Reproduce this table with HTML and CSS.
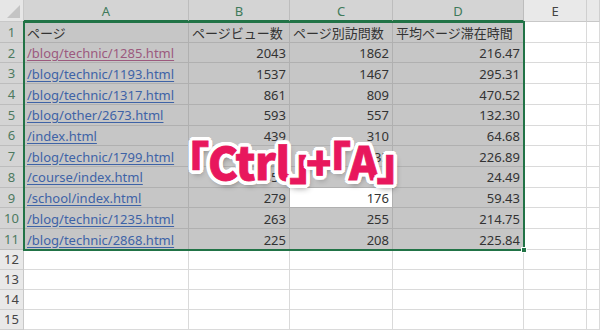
FILE: index.html
```html
<!DOCTYPE html>
<html lang="ja">
<head>
<meta charset="utf-8">
<link rel="stylesheet" href="styles.css">
</head>
<body>
<div class="wrap">
  <div class="sheet">
    <div class="corner"><span class="tri"></span></div>
    <div class="ch sel">A</div><div class="ch sel">B</div><div class="ch sel">C</div><div class="ch sel">D</div><div class="ch">E</div><div class="ch"></div>

    <div class="rh sel">1</div><div class="c sel">ページ</div><div class="c sel">ページビュー数</div><div class="c sel">ページ別訪問数</div><div class="c sel">平均ページ滞在時間</div><div class="c"></div><div class="c"></div>
    <div class="rh sel">2</div><div class="c sel"><a class="lnk visited">/blog/technic/1285.html</a></div><div class="c sel num">2043</div><div class="c sel num">1862</div><div class="c sel num">216.47</div><div class="c"></div><div class="c"></div>
    <div class="rh sel">3</div><div class="c sel"><a class="lnk">/blog/technic/1193.html</a></div><div class="c sel num">1537</div><div class="c sel num">1467</div><div class="c sel num">295.31</div><div class="c"></div><div class="c"></div>
    <div class="rh sel">4</div><div class="c sel"><a class="lnk">/blog/technic/1317.html</a></div><div class="c sel num">861</div><div class="c sel num">809</div><div class="c sel num">470.52</div><div class="c"></div><div class="c"></div>
    <div class="rh sel">5</div><div class="c sel"><a class="lnk">/blog/other/2673.html</a></div><div class="c sel num">593</div><div class="c sel num">557</div><div class="c sel num">132.30</div><div class="c"></div><div class="c"></div>
    <div class="rh sel">6</div><div class="c sel"><a class="lnk">/index.html</a></div><div class="c sel num">439</div><div class="c sel num">310</div><div class="c sel num">64.68</div><div class="c"></div><div class="c"></div>
    <div class="rh sel">7</div><div class="c sel"><a class="lnk">/blog/technic/1799.html</a></div><div class="c sel num">412</div><div class="c sel num">333</div><div class="c sel num">226.89</div><div class="c"></div><div class="c"></div>
    <div class="rh sel">8</div><div class="c sel"><a class="lnk">/course/index.html</a></div><div class="c sel num">351</div><div class="c sel num">291</div><div class="c sel num">24.49</div><div class="c"></div><div class="c"></div>
    <div class="rh sel">9</div><div class="c sel"><a class="lnk">/school/index.html</a></div><div class="c sel num">279</div><div class="c act num">176</div><div class="c sel num">59.43</div><div class="c"></div><div class="c"></div>
    <div class="rh sel">10</div><div class="c sel"><a class="lnk">/blog/technic/1235.html</a></div><div class="c sel num">263</div><div class="c sel num">255</div><div class="c sel num">214.75</div><div class="c"></div><div class="c"></div>
    <div class="rh sel">11</div><div class="c sel"><a class="lnk">/blog/technic/2868.html</a></div><div class="c sel num">225</div><div class="c sel num">208</div><div class="c sel num">225.84</div><div class="c"></div><div class="c"></div>

    <div class="rh">12</div><div class="c"></div><div class="c"></div><div class="c"></div><div class="c"></div><div class="c"></div><div class="c"></div>
    <div class="rh">13</div><div class="c"></div><div class="c"></div><div class="c"></div><div class="c"></div><div class="c"></div><div class="c"></div>
    <div class="rh">14</div><div class="c"></div><div class="c"></div><div class="c"></div><div class="c"></div><div class="c"></div><div class="c"></div>
    <div class="rh">15</div><div class="c"></div><div class="c"></div><div class="c"></div><div class="c"></div><div class="c"></div><div class="c"></div>
  </div>
  <div class="selbox"><span class="handle"></span></div>
  <div class="caption"><span class="br">「</span>Ctrl<span class="br br-close">」</span><span class="plus">+</span><span class="br br-open2">「</span>A<span class="br br-end">」</span></div>
</div>
</body>
</html>
```
FILE: styles.css
```css
* { box-sizing: border-box; }
html, body { margin: 0; padding: 0; background: #fff; }
.wrap { position: relative; width: 600px; height: 330px; overflow: hidden; }
.sheet {
  display: grid;
  grid-template-columns: 24px 165px 101px 103px 131px 63px 13px;
  grid-template-rows: 22px repeat(11, 20.73px) repeat(4, 20px);
  font-family: "Noto Sans CJK JP", "Noto Sans", sans-serif;
  font-size: 13px;
  color: #333;
}
.corner {
  position: relative;
  background: #e6e6e6;
  border-right: 1px solid #c8c8c8;
  border-bottom: 1px solid #c8c8c8;
}
.tri {
  position: absolute; right: 3px; bottom: 3px;
  width: 0; height: 0;
  border-left: 13px solid transparent;
  border-bottom: 13px solid #c4c4c4;
}
.ch {
  background: #e9e9e9;
  border-right: 1px solid #cfcfcf;
  border-bottom: 1px solid #c8c8c8;
  display: flex; align-items: center; justify-content: center;
  font-family: "Noto Sans", sans-serif;
  font-size: 13px;
  color: #444;
  padding-top: 1px;
}
.ch.sel { background: #d4d4d4; color: #3f7a5a; border-right-color: #bdbdbd; border-bottom: 2px solid #217346; }
.rh {
  background: #e9e9e9;
  border-right: 1px solid #c8c8c8;
  border-bottom: 1px solid #cfcfcf;
  display: flex; align-items: center; justify-content: center;
  font-family: "Noto Sans", sans-serif;
  font-size: 13px;
  color: #444;
}
.rh.sel { background: #d4d4d4; color: #4d7a5f; border-bottom-color: #bdbdbd; }
.c {
  border-right: 1px solid #dadada;
  border-bottom: 1px solid #dadada;
  display: flex; align-items: center;
  padding: 1px 3px 0 3px;
  white-space: nowrap;
  overflow: hidden;
  background: #fff;
}
.c.sel { background: #c6c6c6; border-right-color: #b0b0b0; border-bottom-color: #b0b0b0; }
.c.act { background: #fff; border-right-color: #b0b0b0; border-bottom-color: #b0b0b0; }
.num { justify-content: flex-end; font-family: "Noto Sans", sans-serif; }
.lnk { color: #3e63a6; text-decoration: underline; text-underline-offset: 2px; font-family: "Noto Sans", sans-serif; }
.lnk.visited { color: #9c5a7e; }
.selbox {
  position: absolute;
  left: 23px; top: 21px;
  width: 502px; height: 230px;
  border: 2px solid #217346;
  z-index: 2;
}
.handle {
  position: absolute; right: -4px; bottom: -4px;
  width: 6px; height: 6px;
  background: #217346;
  border: 1px solid #fff;
}
.caption {
  position: absolute;
  left: 186px; top: 138px;
  z-index: 5;
  font-family: "Noto Sans CJK JP", sans-serif;
  font-weight: 900;
  font-size: 45px;
  line-height: 1;
  letter-spacing: -0.5px;
  color: #e8175d;
  font-feature-settings: "palt";
  -webkit-text-stroke: 0.8px #e8175d;
  white-space: nowrap;
  text-shadow:
    4px 0 0 #fff, -4px 0 0 #fff, 0 4px 0 #fff, 0 -4px 0 #fff,
    2.8px 2.8px 0 #fff, -2.8px 2.8px 0 #fff, 2.8px -2.8px 0 #fff, -2.8px -2.8px 0 #fff,
    3.7px 1.5px 0 #fff, -3.7px 1.5px 0 #fff, 3.7px -1.5px 0 #fff, -3.7px -1.5px 0 #fff,
    1.5px 3.7px 0 #fff, -1.5px 3.7px 0 #fff, 1.5px -3.7px 0 #fff, -1.5px -3.7px 0 #fff,
    2px 0 0 #fff, -2px 0 0 #fff, 0 2px 0 #fff, 0 -2px 0 #fff,
    2px 4px 6px rgba(0,0,0,0.45);
}
.br-close { margin-right: -6px; }
.plus { margin-right: -5px; }
.br-open2 { margin-right: -1px; }
.br-end { margin-left: -1px; }
```
